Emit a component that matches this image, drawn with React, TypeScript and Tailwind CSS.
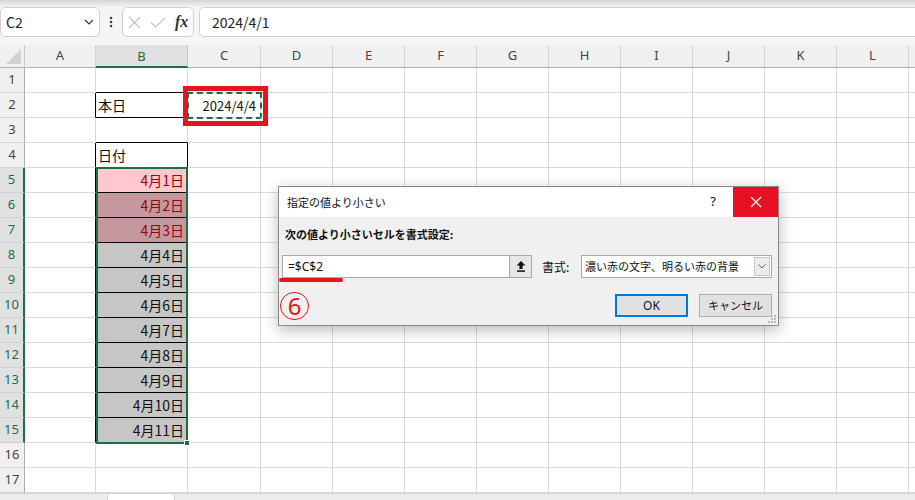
import React from 'react'

const cols = ['A', 'B', 'C', 'D', 'E', 'F', 'G', 'H', 'I', 'J', 'K', 'L', '']
const colW = [
  'w-[71px]',
  'w-[92px]',
  'w-[73px]',
  'w-[72px]',
  'w-[72px]',
  'w-[72px]',
  'w-[72px]',
  'w-[72px]',
  'w-[72px]',
  'w-[72px]',
  'w-[72px]',
  'w-[72px]',
  'w-[72px]',
]

const rows = Array.from({ length: 17 }, (_, i) => i + 1)

function isDateRow(r: number) {
  return r >= 5 && r <= 15
}

function borderClasses(r: number, c: number) {
  const blackRight = (c === 0 || c === 1) && (r === 2 || (r >= 4 && r <= 15))
  const blackBottom = c === 1 && r >= 1 && r <= 15
  return [
    blackRight ? 'border-r-black' : 'border-r-[#dadada]',
    blackBottom ? 'border-b-black' : 'border-b-[#dadada]',
  ].join(' ')
}

function fillClass(r: number) {
  if (r === 5) return 'bg-[#ffc7ce] text-[#9c0006]'
  if (r === 6 || r === 7) return 'bg-[#c6989d] text-[#8e0a14]'
  return 'bg-[#c6c6c6] text-[#111]'
}

function CellContent({ r, c }: { r: number; c: number }) {
  if (c === 1 && r === 2) return <span className="pl-[2px] pt-[1px]">本日</span>
  if (c === 1 && r === 4) return <span className="pl-[2px] pt-[1px]">日付</span>
  if (c === 1 && isDateRow(r)) {
    return <span className="ml-auto pr-[3px] pt-[1px]">4月{r - 4}日</span>
  }
  if (c === 2 && r === 2) {
    return (
      <>
        <span className="ml-auto whitespace-nowrap pr-[4px] pt-[1px] text-[13px]">2024/4/4</span>
        <div className="absolute -left-[1px] -top-[1px] right-[-2px] bottom-[-2px] border-2 border-dashed border-[#1e6e42]" />
      </>
    )
  }
  return null
}

function TopBar() {
  return (
    <div className="flex h-[45px] flex-col bg-[#f5f5f5]">
      <div className="h-[7px] bg-gradient-to-b from-[#d6d6d6] to-[#f3f3f3]" />
      <div className="flex h-[30px] items-stretch">
        <div className="flex w-[100px] shrink-0 items-center justify-between rounded-[5px] border border-[#d1d1d1] bg-white pl-[5px] pr-[5px] text-[14px] text-[#222]">
          <span>C2</span>
          <svg width="10" height="6" viewBox="0 0 10 6" fill="none">
            <path d="M1 1L5 5L9 1" stroke="#333" strokeWidth="1.2" />
          </svg>
        </div>
        <div className="flex w-[22px] shrink-0 items-center justify-center">
          <svg width="4" height="12" viewBox="0 0 4 12">
            <circle cx="2" cy="2" r="1.3" fill="#444" />
            <circle cx="2" cy="6" r="1.3" fill="#444" />
            <circle cx="2" cy="10" r="1.3" fill="#444" />
          </svg>
        </div>
        <div className="flex w-[72px] shrink-0 items-center gap-[9px] rounded-[5px] border border-[#d1d1d1] bg-white pl-[5px]">
          <svg width="13" height="13" viewBox="0 0 13 13" fill="none">
            <path d="M1 1L12 12M12 1L1 12" stroke="#c4c4c4" strokeWidth="1.2" />
          </svg>
          <svg width="16" height="11" viewBox="0 0 16 11" fill="none">
            <path d="M1 5.5L5.5 10L15 1" stroke="#c4c4c4" strokeWidth="1.2" />
          </svg>
          <span className="font-['Liberation_Serif',serif] text-[16px] font-bold italic leading-none text-[#333]">fx</span>
        </div>
        <div className="ml-[5px] flex w-[740px] shrink-0 items-center rounded-[5px] border border-[#d1d1d1] bg-white pl-[12px] text-[14px] text-[#222]">
          2024/4/1
        </div>
      </div>
      <div className="h-[8px]" />
    </div>
  )
}

function HeaderRow() {
  return (
    <div className="flex h-[23px] font-['Noto_Sans',sans-serif] text-[13px]">
      <div className="relative w-[25px] shrink-0 border-r border-b border-r-[#c8c8c8] border-b-[#b0b0b0] bg-[#f0f0f0]">
        <svg className="absolute bottom-[3px] right-[3px]" width="15" height="15" viewBox="0 0 15 15">
          <polygon points="15,0 15,15 0,15" fill="#d0d0d0" />
        </svg>
      </div>
      {cols.map((col, i) =>
        i === 1 ? (
          <div
            key={i}
            className={`${colW[i]} flex shrink-0 items-center justify-center border-r border-b-2 border-r-[#c8c8c8] border-b-[#1e6e42] bg-[#e1e1e1] pt-[2px] text-[#1e6e42]`}
          >
            {col}
          </div>
        ) : (
          <div
            key={i}
            className={`${colW[i]} flex shrink-0 items-center justify-center border-r border-b border-r-[#d4d4d4] border-b-[#b0b0b0] bg-[#f0f0f0] text-[#444]`}
          >
            {col}
          </div>
        ),
      )}
    </div>
  )
}

function GridRow({ r }: { r: number }) {
  const sel = isDateRow(r)
  return (
    <div className="flex h-[25px]">
      <div
        className={`flex w-[25px] shrink-0 items-center justify-center border-b font-['Noto_Sans',sans-serif] text-[13px] ${
          sel
            ? 'border-r-2 border-r-[#1e6e42] border-b-[#d0d0d0] bg-[#e1e1e1] text-[#1e6e42]'
            : 'border-r border-r-[#b0b0b0] border-b-[#d4d4d4] bg-[#f0f0f0] text-[#444]'
        }`}
      >
        {r}
      </div>
      {cols.map((_, c) => (
        <div
          key={c}
          className={`${colW[c]} relative flex shrink-0 items-center border-r border-b text-[14px] ${borderClasses(r, c)} ${
            c === 1 && sel ? fillClass(r) : 'text-[#111]'
          }`}
        >
          <CellContent r={r} c={c} />
        </div>
      ))}
    </div>
  )
}

function Dialog() {
  return (
    <div className="absolute left-[278px] top-[186px] flex h-[140px] w-[501px] flex-col border border-[#8a8a8a] bg-[#f0f0f0] text-[#111] shadow-[0_4px_14px_rgba(0,0,0,0.28)]">
      <div className="flex h-[30px] shrink-0 items-center bg-white">
        <span className="pl-[8px] text-[11px]">指定の値より小さい</span>
        <span className="ml-auto mr-[17px] font-['Noto_Sans',sans-serif] text-[13px]">?</span>
        <div className="flex h-full w-[45px] items-center justify-center bg-[#e81123]">
          <svg width="12" height="12" viewBox="0 0 12 12" fill="none">
            <path d="M1 1L11 11M11 1L1 11" stroke="#fff" strokeWidth="1.2" />
          </svg>
        </div>
      </div>
      <div className="relative flex flex-1 flex-col">
        <div className="pl-[6px] pt-[9px] text-[11px] font-bold leading-[16px]">次の値より小さいセルを書式設定:</div>
        <div className="mt-[13px] flex h-[23px] items-center">
          <div className="ml-[3px] flex h-full w-[250px] items-center border border-[#a8a8a8] bg-white">
            <span className="pl-[5px] font-['Noto_Sans',sans-serif] text-[12px]">=$C$2</span>
            <div className="ml-auto flex h-full w-[22px] items-center justify-center border-l border-[#a8a8a8] bg-[#e6e6e6]">
              <svg width="10" height="11" viewBox="0 0 10 11">
                <path d="M5 0L9.5 4.5H6.6V8H3.4V4.5H0.5Z" fill="#111" />
                <rect x="1" y="9.3" width="8" height="1.5" fill="#111" />
              </svg>
            </div>
          </div>
          <span className="ml-[10px] w-[30px] text-[12px]">書式:</span>
          <div className="ml-[9px] flex h-full w-[191px] items-center border border-[#a8a8a8] bg-white">
            <span className="pl-[3px] text-[11px]">濃い赤の文字、明るい赤の背景</span>
            <div className="ml-auto mr-[1px] flex h-[19px] w-[16px] items-center justify-center border border-[#c8c8c8] bg-[#ececec]">
              <svg width="8" height="5" viewBox="0 0 8 5" fill="none">
                <path d="M0.5 0.5L4 4L7.5 0.5" stroke="#666" strokeWidth="1" />
              </svg>
            </div>
          </div>
        </div>
        <div className="mt-[16px] flex justify-end pr-[6px]">
          <div className="flex h-[23px] w-[73px] items-center justify-center border-2 border-[#0078d7] bg-[#e1e1e1] font-['Noto_Sans',sans-serif] text-[12px]">
            OK
          </div>
          <div className="ml-[11px] flex h-[23px] w-[73px] items-center justify-center border border-[#adadad] bg-[#e1e1e1] text-[11px]">
            キャンセル
          </div>
        </div>
        <svg className="absolute bottom-[1px] right-[1px]" width="10" height="10" viewBox="0 0 10 10">
          <rect x="7" y="1" width="2" height="2" fill="#b8b8b8" />
          <rect x="4" y="4" width="2" height="2" fill="#b8b8b8" />
          <rect x="7" y="4" width="2" height="2" fill="#b8b8b8" />
          <rect x="1" y="7" width="2" height="2" fill="#b8b8b8" />
          <rect x="4" y="7" width="2" height="2" fill="#b8b8b8" />
          <rect x="7" y="7" width="2" height="2" fill="#b8b8b8" />
        </svg>
        {/* annotations */}
        <div className="absolute left-0 top-[61px] h-[4px] w-[64px] rounded-full bg-[#e8141b]" />
        <div className="absolute left-[1px] top-[75px] flex h-[28px] w-[29px] items-center justify-center rounded-full border-[1.5px] border-[#e8141b] font-['Noto_Sans',sans-serif] text-[24px] leading-none text-[#e8141b]">
          6
        </div>
      </div>
    </div>
  )
}

export default function App() {
  return (
    <div className="relative h-[500px] w-[915px] overflow-hidden bg-white font-['Noto_Sans_CJK_JP',sans-serif]">
      <TopBar />
      <HeaderRow />
      {rows.map((r) => (
        <GridRow key={r} r={r} />
      ))}
      <div className="flex h-[7px] border-t border-[#d4d4d4] bg-[#ececec]">
        <div className="w-[107px]" />
        <div className="w-[68px] rounded-t-[3px] border-x border-[#d4d4d4] bg-white" />
      </div>

      {/* selection outline B5:B15 */}
      <div className="absolute left-[96px] top-[167px] h-[277px] w-[92px] border-2 border-[#1e6e42]" />
      <div className="absolute left-[184px] top-[440px] h-[6px] w-[6px] border border-white bg-[#1e6e42]" />

      {/* red annotation around C2 */}
      <div className="absolute left-[183px] top-[86px] h-[40px] w-[85px] border-[5px] border-[#e8141b]" />

      <Dialog />
    </div>
  )
}
